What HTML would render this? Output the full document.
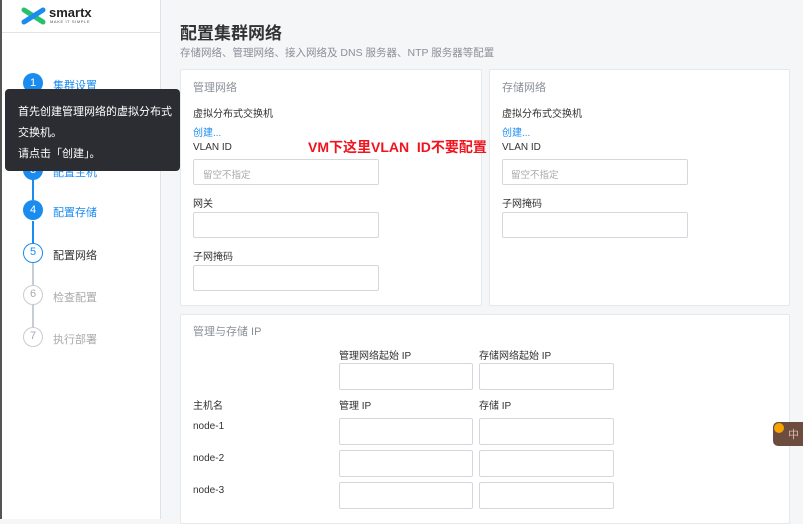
<!DOCTYPE html>
<html><head><meta charset="utf-8"><style>
*{margin:0;padding:0;box-sizing:border-box}
body{width:803px;height:519px;overflow:hidden;position:relative;background:#f5f6f8;font-family:"Liberation Sans","Noto Sans CJK SC",sans-serif;font-size:10px;color:#333}
.a{position:absolute;white-space:nowrap}
.side{position:absolute;left:0;top:0;width:161px;height:519px;background:#fff;border-right:1px solid #dfe2e7;border-left:2px solid #555}
.panel{position:absolute;background:#fff;border:1px solid #e6e8ec;border-radius:2px}
.in{position:absolute;border:1px solid #d4d7dc;border-radius:2px;background:#fff}
.c{position:absolute;width:20px;height:20px;border-radius:50%;text-align:center;line-height:20px;font-size:11px}
.g{color:#8a8f98}
</style></head><body>
<div class="side">
<svg class="a" style="left:19px;top:7px" width="26" height="18" viewBox="0 0 26 18"><path d="M3 3 L22 15" stroke="#27c06b" stroke-width="5" stroke-linecap="round"/><path d="M3 15 L22 3" stroke="#1a8cf0" stroke-width="5" stroke-linecap="round"/></svg>
<div class="a" style="left:47px;top:5px;font-size:13px;font-weight:bold;color:#222">smartx</div>
<div class="a" style="left:48px;top:19px;font-size:4px;color:#555;letter-spacing:.6px">MAKE IT SIMPLE</div>
<div class="a" style="left:0;top:32px;width:158px;border-top:1px solid #e0e3e8"></div>
<div class="a" style="left:30px;top:93px;width:2px;height:107px;background:#1a8cf0"></div>
<div class="a" style="left:30px;top:221px;width:2px;height:22px;background:#1a8cf0"></div>
<div class="a" style="left:30px;top:263px;width:2px;height:64px;background:#c8ccd3"></div>
<div class="c" style="left:21px;top:73px;background:#1a8cf0;color:#fff">1</div>
<div class="a" style="left:51px;top:77px;font-size:11px;color:#1a8cf0">集群设置</div>
<div class="c" style="left:21px;top:160px;background:#1a8cf0;color:#fff">3</div>
<div class="a" style="left:51px;top:164px;font-size:11px;color:#1a8cf0">配置主机</div>
<div class="c" style="left:21px;top:200px;background:#1a8cf0;color:#fff">4</div>
<div class="a" style="left:51px;top:204px;font-size:11px;color:#1a8cf0">配置存储</div>
<div class="c" style="left:21px;top:243px;background:#fff;border:1.5px solid #1a8cf0;color:#1a8cf0;line-height:17px">5</div>
<div class="a" style="left:51px;top:247px;font-size:11px;color:#333">配置网络</div>
<div class="c" style="left:21px;top:285px;background:#fff;border:1.5px solid #c8ccd3;color:#aaa;line-height:17px">6</div>
<div class="a" style="left:51px;top:289px;font-size:11px;color:#aaa">检查配置</div>
<div class="c" style="left:21px;top:327px;background:#fff;border:1.5px solid #c8ccd3;color:#aaa;line-height:17px">7</div>
<div class="a" style="left:51px;top:331px;font-size:11px;color:#aaa">执行部署</div>
</div>
<div class="a" style="left:5px;top:89px;width:175px;height:82px;background:#2b2d33;border-radius:4px;color:#fff;font-size:11px;line-height:21px;padding:13px 0 0 13px;white-space:normal">首先创建管理网络的虚拟分布式<br>交换机。<br>请点击「创建」。</div>
<div class="a" style="left:180px;top:124px;width:0;height:0;border-top:6px solid transparent;border-bottom:6px solid transparent;border-left:6px solid #2b2d33"></div>

<div class="a" style="left:180px;top:19px;font-size:17px;font-weight:bold;color:#333">配置集群网络</div>
<div class="a g" style="left:180px;top:45px;font-size:10.5px">存储网络、管理网络、接入网络及 DNS 服务器、NTP 服务器等配置</div>

<div class="panel" style="left:180px;top:69px;width:302px;height:237px"></div>
<div class="a g" style="left:193px;top:79px;font-size:11px">管理网络</div>
<div class="a" style="left:193px;top:105px">虚拟分布式交换机</div>
<div class="a" style="left:193px;top:124px;color:#1a8cf0">创建...</div>
<div class="a" style="left:193px;top:142px">VLAN ID</div>
<div class="in" style="left:193px;top:159px;width:186px;height:26px"><span class="a" style="left:9px;top:7px;color:#aaa;font-size:9.5px">留空不指定</span></div>
<div class="a" style="left:193px;top:195px">网关</div>
<div class="in" style="left:193px;top:212px;width:186px;height:26px"></div>
<div class="a" style="left:193px;top:248px">子网掩码</div>
<div class="in" style="left:193px;top:265px;width:186px;height:26px"></div>

<div class="panel" style="left:489px;top:69px;width:301px;height:237px"></div>
<div class="a g" style="left:502px;top:79px;font-size:11px">存储网络</div>
<div class="a" style="left:502px;top:105px">虚拟分布式交换机</div>
<div class="a" style="left:502px;top:124px;color:#1a8cf0">创建...</div>
<div class="a" style="left:502px;top:142px">VLAN ID</div>
<div class="in" style="left:502px;top:159px;width:186px;height:26px"><span class="a" style="left:8px;top:7px;color:#aaa;font-size:9.5px">留空不指定</span></div>
<div class="a" style="left:502px;top:195px">子网掩码</div>
<div class="in" style="left:502px;top:212px;width:186px;height:26px"></div>

<div class="a" style="left:308px;top:137px;font-size:14px;font-weight:bold;color:#f0141e">VM下这里VLAN&nbsp; ID不要配置</div>

<div class="panel" style="left:180px;top:314px;width:610px;height:210px"></div>
<div class="a g" style="left:193px;top:323px;font-size:11px">管理与存储 IP</div>
<div class="a" style="left:339px;top:347px">管理网络起始 IP</div>
<div class="a" style="left:479px;top:347px">存储网络起始 IP</div>
<div class="in" style="left:339px;top:363px;width:134px;height:27px"></div>
<div class="in" style="left:479px;top:363px;width:135px;height:27px"></div>
<div class="a" style="left:193px;top:397px">主机名</div>
<div class="a" style="left:339px;top:397px">管理 IP</div>
<div class="a" style="left:479px;top:397px">存储 IP</div>
<div class="a" style="left:193px;top:421px">node-1</div>
<div class="a" style="left:193px;top:453px">node-2</div>
<div class="a" style="left:193px;top:485px">node-3</div>
<div class="in" style="left:339px;top:418px;width:134px;height:27px"></div>
<div class="in" style="left:479px;top:418px;width:135px;height:27px"></div>
<div class="in" style="left:339px;top:450px;width:134px;height:27px"></div>
<div class="in" style="left:479px;top:450px;width:135px;height:27px"></div>
<div class="in" style="left:339px;top:482px;width:134px;height:27px"></div>
<div class="in" style="left:479px;top:482px;width:135px;height:27px"></div>

<div class="a" style="left:773px;top:422px;width:30px;height:24px;background:#6b4c3e;border-radius:5px 0 0 5px;color:#d9b8a8;font-size:11px;padding:4px 0 0 15px">中</div>
<div class="a" style="left:774px;top:423px;width:10px;height:10px;background:#f5a300;border-radius:50%"></div>
</body></html>
